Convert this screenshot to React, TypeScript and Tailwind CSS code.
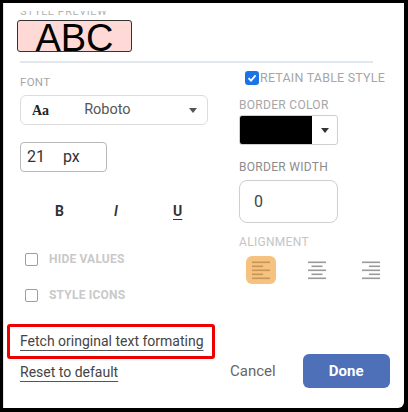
import React from "react";

function AlignIcon({ kind, active }: { kind: "left" | "center" | "right"; active?: boolean }) {
  const color = active ? "#c99556" : "#9a9a9a";
  const lines = [
    { w: 18 },
    { w: 11 },
    { w: 18 },
    { w: 11 },
    { w: 18 },
  ];
  return (
    <svg width="20" height="20" viewBox="0 0 20 20">
      {lines.map((l, i) => {
        const x = kind === "left" ? 1 : kind === "center" ? 1 + (18 - l.w) / 2 : 19 - l.w;
        return <rect key={i} x={x} y={1.5 + i * 4} width={l.w} height={1.6} fill={color} />;
      })}
    </svg>
  );
}

function Check({ label }: { label: string }) {
  return (
    <div className="flex items-center h-[16px]">
      <div className="ml-[5px] w-[13px] h-[13px] border-[1.5px] border-[#9e9e9e] rounded-[2px]" />
      <span className="ml-[11px] text-[12px] font-bold text-[#c9c9c9] tracking-[0.2px] leading-none">{label}</span>
    </div>
  );
}

export default function App() {
  return (
    <div
      className="w-[408px] h-[412px] bg-black pt-[3px] pl-[3px] pr-[4px] pb-[4px]"
      style={{ fontFamily: "Roboto, 'Open Sans', Arial, sans-serif" }}
    >
      <div className="w-full h-full bg-white rounded-br-[6px] border-l border-[#e4e4e4] flex flex-col">
        {/* Preview */}
        <div className="ml-[16px] mt-[8px] h-[7px] overflow-hidden">
          <div className="mt-[-5px] text-[11px] leading-[12px] text-[#b3b3b3] tracking-[0.5px]">STYLE PREVIEW</div>
        </div>
        <div className="ml-[13px] mt-[2px] w-[115px] h-[32px] bg-[#ffd9d5] border-[1.5px] border-[#333] rounded-[3px] flex items-center justify-center">
          <span
            className="text-[38px] leading-[28px] text-black mt-[4px]"
            style={{ fontFamily: "'Liberation Sans', Arial, sans-serif" }}
          >
            ABC
          </span>
        </div>
        <div className="ml-[16px] mt-[9px] w-[353px] h-[2px] bg-[#e2e7ed]" />

        {/* Columns */}
        <div className="flex ml-[16px] mt-[1px]">
          <div className="w-[188px] flex flex-col">
            <div className="mt-[11px] h-[14px] text-[11.5px] leading-[14px] text-[#a6a6a6] tracking-[0.3px]">FONT</div>
            <div className="mt-[6px] h-[30px] border border-[#dcdcdc] rounded-[6px] flex items-center">
              <span
                className="ml-[11px] text-[14px] font-bold text-[#222]"
                style={{ fontFamily: "'Liberation Serif', 'Times New Roman', serif" }}
              >
                Aa
              </span>
              <span className="ml-[35px] text-[14.5px] text-[#555]">Roboto</span>
              <svg className="ml-auto mr-[10px]" width="8" height="5" viewBox="0 0 8 5">
                <path d="M0 0 H8 L4 5 Z" fill="#555" />
              </svg>
            </div>
            <div className="mt-[17px] w-[87px] h-[30px] border border-[#b8b8b8] rounded-[4px] flex items-center">
              <span className="ml-[6px] text-[16px] text-[#333]">21</span>
              <span className="ml-[18px] text-[16px] text-[#333]">px</span>
            </div>
            <div className="mt-[29px] h-[20px] flex items-center text-[14px] font-bold text-[#333]">
              <span className="ml-[35px] w-[12px]">B</span>
              <span className="ml-[47px] w-[8px] italic font-semibold">I</span>
              <span className="ml-[51px] underline underline-offset-[3px]">U</span>
            </div>
            <div className="mt-[30px]">
              <Check label="HIDE VALUES" />
            </div>
            <div className="mt-[20px]">
              <Check label="STYLE ICONS" />
            </div>
          </div>

          <div className="ml-[31px] flex flex-col">
            <div className="mt-[7px] h-[14px] flex items-center">
              <div className="ml-[6px] w-[14px] h-[14px] rounded-[3px] bg-[#1a73e8] flex items-center justify-center">
                <svg width="10" height="10" viewBox="0 0 10 10">
                  <path d="M1.5 5.2 L4 7.6 L8.6 2.4" stroke="white" strokeWidth="1.8" fill="none" />
                </svg>
              </div>
              <span className="ml-[1px] text-[12.5px] leading-none text-[#a6a6a6] tracking-[0.2px]">RETAIN TABLE STYLE</span>
            </div>
            <div className="mt-[13px] h-[14px] text-[12px] leading-[14px] text-[#a6a6a6] tracking-[0.3px]">BORDER COLOR</div>
            <div className="mt-[3px] w-[99px] h-[30px] border border-[#cfcfcf] rounded-[3px] flex overflow-hidden">
              <div className="w-[72px] h-full bg-black" />
              <div className="flex-1 flex items-center justify-center">
                <svg width="8" height="5" viewBox="0 0 8 5">
                  <path d="M0 0 H8 L4 5 Z" fill="#333" />
                </svg>
              </div>
            </div>
            <div className="mt-[15px] h-[14px] text-[12px] leading-[14px] text-[#8c8c8c] tracking-[0.3px]">BORDER WIDTH</div>
            <div className="mt-[6px] w-[99px] h-[43px] border border-[#cfcfcf] rounded-[8px] flex items-center">
              <span className="ml-[14px] text-[16px] text-[#444]">0</span>
            </div>
            <div className="mt-[12px] h-[14px] text-[12px] leading-[14px] text-[#c4c4c4] tracking-[0.3px]">ALIGNMENT</div>
            <div className="mt-[7px] h-[28px] flex items-center">
              <div className="ml-[7px] w-[30px] h-[28px] rounded-[6px] bg-[#f6c27f] flex items-center justify-center">
                <AlignIcon kind="left" active />
              </div>
              <div className="ml-[27px] w-[27px] h-[28px] flex items-center justify-center">
                <AlignIcon kind="center" />
              </div>
              <div className="ml-[27px] w-[27px] h-[28px] flex items-center justify-center">
                <AlignIcon kind="right" />
              </div>
            </div>
          </div>
        </div>

        {/* Bottom */}
        <div className="mt-[21px] flex">
          <div className="flex flex-col">
            <div className="ml-[3px] w-[208px] h-[35px] border-[3px] border-[#ee0000] rounded-[3px] flex items-center">
              <span className="ml-[10px] text-[14px] text-[#444] underline underline-offset-[4px] decoration-[#555]">
                Fetch oringinal text formating
              </span>
            </div>
            <span className="ml-[16px] mt-[4px] text-[14px] leading-[18px] text-[#444] underline underline-offset-[4px] decoration-[#555]">
              Reset to default
            </span>
          </div>
          <div className="ml-[15px] mt-[30px] flex items-center h-[34px]">
            <span className="text-[15px] text-[#666]">Cancel</span>
            <button className="ml-[27px] w-[87px] h-[34px] rounded-[6px] bg-[#4d70b8] text-white text-[15px] font-bold">
              Done
            </button>
          </div>
        </div>
      </div>
    </div>
  );
}
